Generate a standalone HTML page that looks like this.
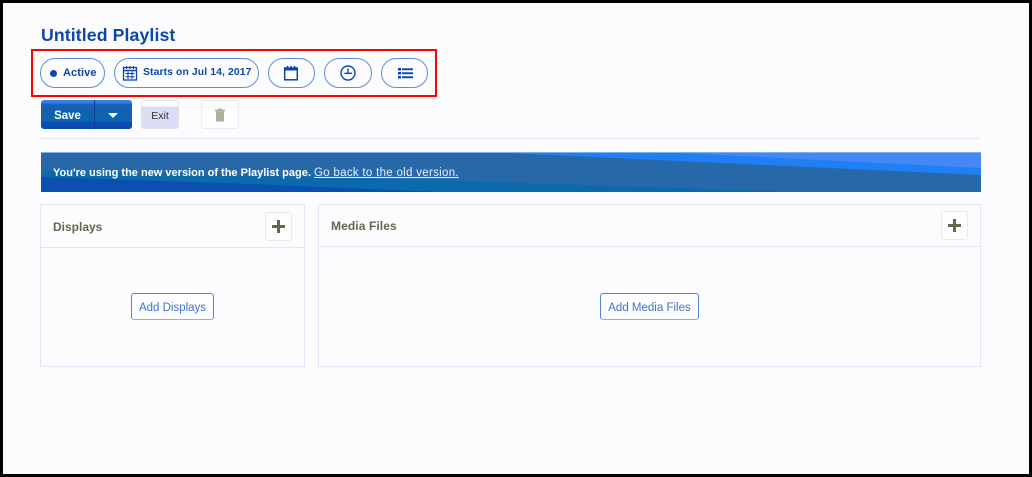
<!DOCTYPE html>
<html><head><meta charset="utf-8">
<style>
html,body{margin:0;padding:0}
body{width:1032px;height:477px;position:relative;overflow:hidden;background:#fcfcff;font-family:"Liberation Sans",sans-serif}
.a{position:absolute;box-sizing:border-box;white-space:nowrap}
.pill{height:30px;border:1px solid #5b8fd8;border-radius:15px;top:58px;color:#0b47ad;font-weight:bold;font-size:11px;line-height:28px;background:#fcfcff}
.panel{border:1px solid #e5e5f8}
.plus{width:27px;height:29px;border:1px solid #e8e8f5;border-radius:3px;background:#fdfdff}
.plus:before{content:"";position:absolute;left:6px;top:12px;width:13px;height:3px;background:#66664c}
.plus:after{content:"";position:absolute;left:11px;top:7px;width:3px;height:13px;background:#66664c}
.add{height:27px;border:1px solid #4f86d6;border-bottom-color:#8fb0e0;border-radius:3px;color:#3a74cf;font-size:11.5px;line-height:28px;text-align:center;background:#fdfdff}
.h{font-size:12px;font-weight:bold;color:#66664f}
</style></head><body>
<div class="a" style="left:0;top:0;width:1032px;height:477px;border:3px solid #000"></div>

<div class="a" style="left:41px;top:23px;font-size:17.7px;font-weight:bold;color:#0d47a8;line-height:24px;letter-spacing:.1px">Untitled Playlist</div>

<div class="a" style="left:31px;top:49px;width:406px;height:48px;border:2px solid #f00"></div>

<div class="a pill" style="left:40px;width:65px;padding-left:22px;letter-spacing:.1px">Active</div>
<div class="a" style="left:50px;top:70px;width:7px;height:7px;border-radius:50%;background:#0b47ad"></div>

<div class="a pill" style="left:114px;width:145px;padding-left:28px;font-size:10.4px;letter-spacing:.1px">Starts on Jul 14, 2017</div>
<svg class="a" style="left:122px;top:65px" width="16" height="16" viewBox="0 0 16 16" fill="none" stroke="#0b47ad" stroke-width="1"><rect x="1.500" y="2.500" width="13" height="12.500" stroke-width="1.300"/><path d="M1.500 5.500h13" stroke-width="1.500"/><path d="M3.500 8.500h9M3.500 11.800h9M6 6.500V14M10 6.500V14M4.500 1v3M8 1v3M11.500 1v3"/></svg>

<div class="a pill" style="left:268px;width:47px"></div>
<svg class="a" style="left:283px;top:65px" width="16" height="16" viewBox="0 0 16 16" fill="none" stroke="#0b47ad"><rect x="1.700" y="3" width="12.600" height="11.800" stroke-width="1.500"/><path d="M1.500 4.500h13" stroke-width="2"/><path d="M4.500 1v3M8 1v3M11.500 1v3" stroke-width="1.500"/></svg>

<div class="a pill" style="left:324px;width:48px"></div>
<svg class="a" style="left:340px;top:65px" width="16" height="16" viewBox="0 0 16 16" fill="none" stroke="#0b47ad" stroke-width="1.400"><circle cx="8" cy="8" r="7"/><path d="M8 3.500V8.300M4.500 8.300H12"/></svg>

<div class="a pill" style="left:381px;width:47px"></div>
<svg class="a" style="left:397px;top:67px" width="17" height="12" viewBox="0 0 17 12" fill="#0b47ad"><rect x="1" y="1" width="3" height="2.500"/><rect x="1" y="5" width="3" height="2.500"/><rect x="1" y="9" width="3" height="2.500"/><rect x="5" y="1.300" width="11" height="1.900"/><rect x="5" y="5.300" width="11" height="1.900"/><rect x="5" y="9.300" width="11" height="1.900"/></svg>

<div class="a" style="left:41px;top:100px;width:91px;height:29px;border-radius:3px;background:linear-gradient(#3a86e8 0,#2b79dc 3px,#1a5fb8 5px,#0f62ad 14px,#0b66ac 21px,#0b4db5 22px,#0a49ae 29px)"></div>
<div class="a" style="left:94px;top:100px;width:1px;height:29px;background:#0a3f8e"></div>
<div class="a" style="left:41px;top:100px;width:53px;height:29px;text-align:center;color:#fff;font-weight:bold;font-size:11.5px;line-height:32px">Save</div>
<div class="a" style="left:108px;top:113px;width:0;height:0;border:5.500px solid transparent;border-top:5px solid #fff;border-bottom:0"></div>

<div class="a" style="left:141px;top:100px;width:38px;height:29px;border:1px solid #e0e0ea;border-radius:3px;background:linear-gradient(#fcfcff 0,#fcfcff 5px,#dcdcf7 6px,#dcdcf7 100%);color:#33332c;font-size:10.500px;line-height:30px;text-align:center">Exit</div>

<div class="a" style="left:201px;top:100px;width:38px;height:29px;border:1px solid #ebebf5;border-radius:3px;background:#fdfdff"></div>
<svg class="a" style="left:214px;top:108px" width="12" height="14" viewBox="0 0 12 14" fill="#b0b0a0"><rect x="1" y="1.500" width="10" height="1.800"/><rect x="4" y="0.500" width="4" height="1.500"/><path d="M2 3.300h8v10.200H2z"/></svg>

<div class="a" style="left:41px;top:138px;width:939px;height:1px;background:#e6e6f4"></div>

<svg class="a" style="left:41px;top:152px" width="940" height="40" viewBox="0 0 940 40">
<rect width="940" height="40" fill="#2769a8"/>
<path d="M0 19 L359 27 L760 40 H0Z" fill="#0b6aab"/>
<path d="M0 25 L209 32 L400 40 H0Z" fill="#0b4fb0"/>
<path d="M443 0H940V23Z" fill="#1f80f5"/>
<path d="M620 0H940V16Z" fill="#4487f5"/>
<rect width="940" height="1" fill="#7fb0ee"/>
</svg>
<div class="a" style="left:53px;top:165px;color:#fff;font-size:11px;line-height:16px;font-weight:bold">You're using the new version of the Playlist page.</div>
<div class="a" style="left:314px;top:165px;color:#e8f0fa;font-size:11.500px;line-height:16px;text-decoration:underline;letter-spacing:.3px">Go back to the old version.</div>

<div class="a panel" style="left:40px;top:204px;width:265px;height:163px"></div>
<div class="a" style="left:41px;top:247px;width:263px;height:1px;background:#e5e5f8"></div>
<div class="a h" style="left:53px;top:219px;line-height:16px">Displays</div>
<div class="a plus" style="left:265px;top:212px"></div>
<div class="a add" style="left:131px;top:293px;width:83px">Add Displays</div>

<div class="a panel" style="left:318px;top:204px;width:663px;height:163px"></div>
<div class="a" style="left:319px;top:246px;width:661px;height:1px;background:#e5e5f8"></div>
<div class="a h" style="left:331px;top:218px;line-height:16px;letter-spacing:.1px">Media Files</div>
<div class="a plus" style="left:941px;top:211px"></div>
<div class="a add" style="left:600px;top:293px;width:99px">Add Media Files</div>
</body></html>
